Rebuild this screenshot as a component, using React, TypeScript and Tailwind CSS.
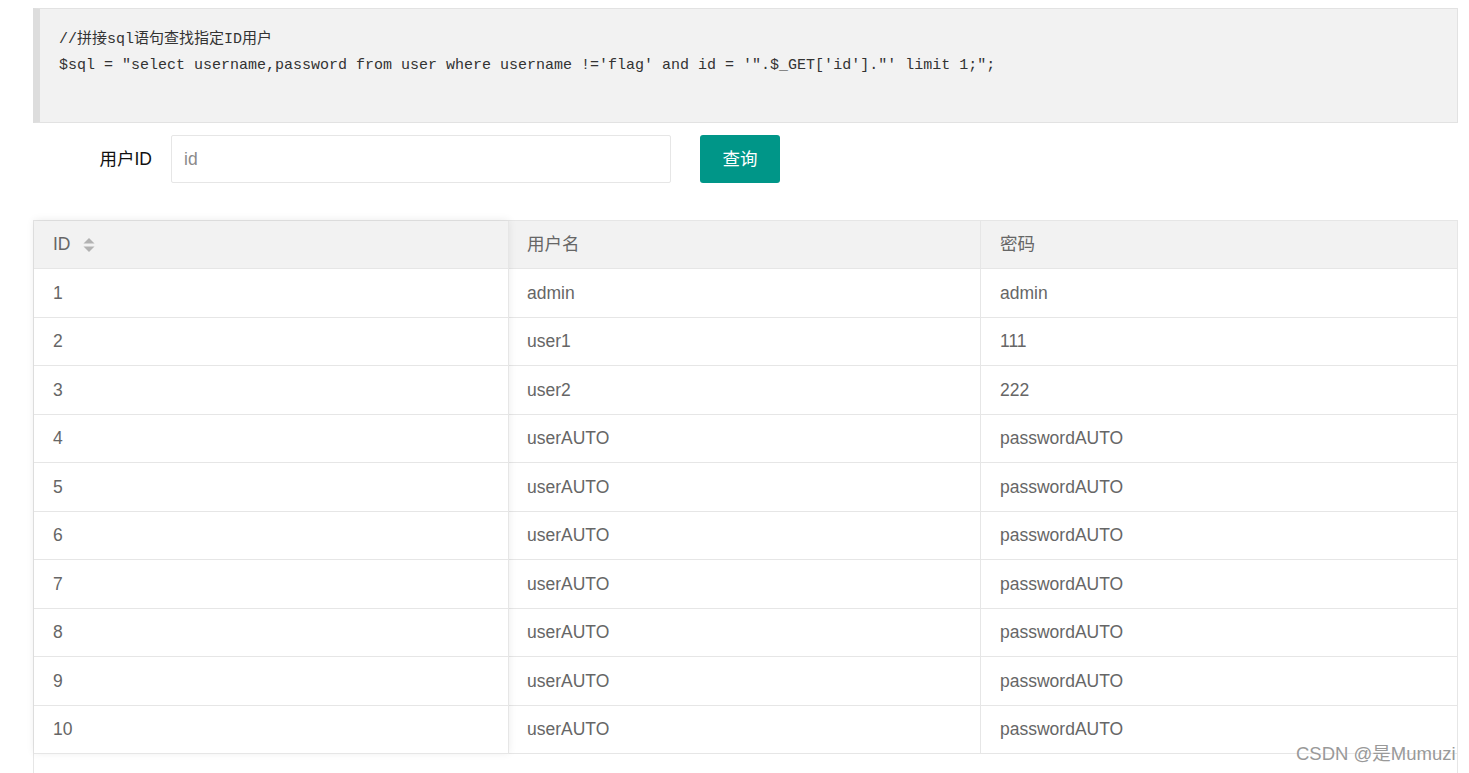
import React from "react";

const rows: [string, string, string][] = [
  ["1", "admin", "admin"],
  ["2", "user1", "111"],
  ["3", "user2", "222"],
  ["4", "userAUTO", "passwordAUTO"],
  ["5", "userAUTO", "passwordAUTO"],
  ["6", "userAUTO", "passwordAUTO"],
  ["7", "userAUTO", "passwordAUTO"],
  ["8", "userAUTO", "passwordAUTO"],
  ["9", "userAUTO", "passwordAUTO"],
  ["10", "userAUTO", "passwordAUTO"],
];

const sans = "font-['Liberation_Sans','Noto_Sans_CJK_SC',sans-serif]";

function SortIcon() {
  return (
    <svg width="12" height="16" viewBox="0 0 12 16" className="ml-[12px]">
      <polygon points="6,1 11.5,6.5 0.5,6.5" fill="#b2b2b2" />
      <polygon points="0.5,9.5 11.5,9.5 6,15" fill="#b2b2b2" />
    </svg>
  );
}

export default function App() {
  return (
    <div className={`relative min-h-[773px] bg-white ${sans}`}>
      <div className="ml-[33px] w-[1425px] pt-[8px]">
        {/* code block */}
        <div className="h-[115px] border border-[#e2e2e2] border-l-[7px] border-l-[#dddddd] bg-[#f2f2f2] pl-[19px] pt-[18px] font-['Liberation_Mono','Noto_Sans_CJK_SC',monospace] text-[15px] leading-[26px] text-[#333]">
          <div className="whitespace-pre">//拼接sql语句查找指定ID用户</div>
          <div className="whitespace-pre">{`$sql = "select username,password from user where username !='flag' and id = '".$_GET['id']."' limit 1;";`}</div>
        </div>

        {/* form */}
        <div className="mt-[12px] flex h-[48px] items-center">
          <label className="w-[138px] pr-[19px] text-right text-[17.5px] text-[#111]">用户ID</label>
          <input
            placeholder="id"
            className="h-[48px] w-[500px] rounded-[2px] border border-[#e6e6e6] px-[12px] text-[17.5px] text-[#333] outline-none placeholder:text-[#8a8a8a]"
          />
          <button className="ml-[29px] h-[48px] w-[80px] rounded-[3px] bg-[#009688] text-[17.5px] text-white">
            查询
          </button>
        </div>

        {/* table */}
        <div className="mt-[37px] flex min-h-[560px] w-[1425px] items-start border-x border-t border-[#e6e6e6] text-[17.5px] text-[#666]">
          <div className="relative z-10 w-[475px] shrink-0 bg-white shadow-[0_-1px_8px_rgba(0,0,0,0.08)]">
            <div className="flex h-[48px] items-center border-b border-r border-[#e6e6e6] bg-[#f2f2f2] px-[19px]">
              ID
              <SortIcon />
            </div>
            {rows.map((r) => (
              <div key={r[0]} className="flex h-[48.5px] items-center border-b border-r border-[#e6e6e6] px-[19px]">
                {r[0]}
              </div>
            ))}
          </div>
          <div className="flex-1">
            <div className="flex h-[48px] border-b border-[#e6e6e6] bg-[#f2f2f2]">
              <div className="flex w-[472px] items-center border-r border-[#e6e6e6] px-[18px]">用户名</div>
              <div className="flex flex-1 items-center px-[19px]">密码</div>
            </div>
            {rows.map((r) => (
              <div key={r[0]} className="flex h-[48.5px] border-b border-[#e6e6e6]">
                <div className="flex w-[472px] items-center border-r border-[#e6e6e6] px-[18px]">{r[1]}</div>
                <div className="flex flex-1 items-center px-[19px]">{r[2]}</div>
              </div>
            ))}
          </div>
        </div>
      </div>

      <div className="absolute left-[1296px] top-[740px] text-[18.5px] text-[#999] [text-shadow:0_0_2px_#fff]">
        CSDN @是Mumuzi
      </div>
    </div>
  );
}
